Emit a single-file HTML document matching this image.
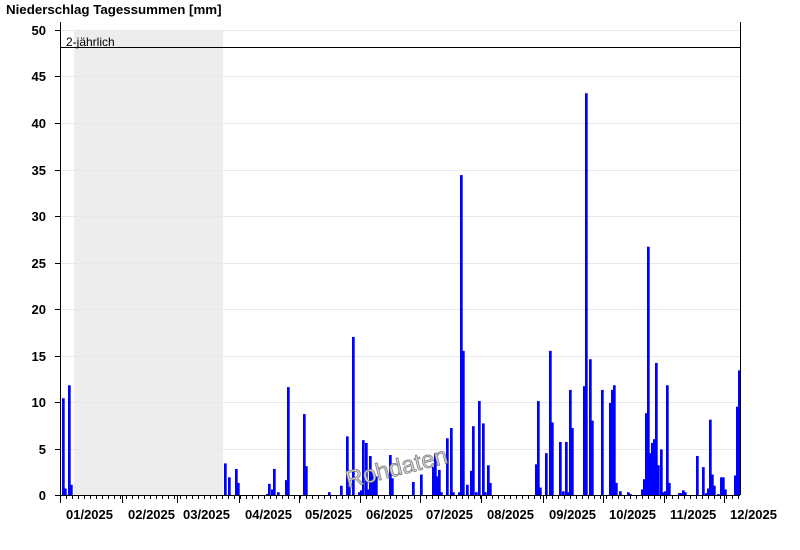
<!DOCTYPE html>
<html><head><meta charset="utf-8"><style>
body{margin:0;background:#fff;width:800px;height:550px;overflow:hidden}
svg{display:block}
text{font-family:"Liberation Sans",Arial,sans-serif}
</style></head><body>
<svg id="s" width="800" height="550" xmlns="http://www.w3.org/2000/svg">
<text x="6" y="14" font-size="13.3" font-weight="bold">Niederschlag Tagessummen [mm]</text>
<rect x="74" y="30" width="149" height="465" fill="#ededed"/>
<g id="grid" stroke="#e8e8e8" stroke-width="1"></g>
<g id="ylab" font-size="13" font-weight="bold" text-anchor="end"></g>
<g id="bars" fill="#0000ff"></g>
<line x1="60" y1="47.5" x2="740" y2="47.5" stroke="#000"/>
<text x="66" y="46" font-size="12">2-jährlich</text>
<text x="0" y="0" font-size="24" fill="#d0d0d0" stroke="#777" stroke-width="0.7" transform="translate(348,488) rotate(-14)">Rohdaten</text>
<line x1="60.5" y1="22" x2="60.5" y2="503" stroke="#000"/>
<line x1="740.5" y1="22" x2="740.5" y2="495" stroke="#000"/>
<line x1="56" y1="495.5" x2="740" y2="495.5" stroke="#000"/>
<g id="ticks" stroke="#000"></g>
<g id="xlab" font-size="13" font-weight="bold"></g>
</svg>
<script>
var NS="http://www.w3.org/2000/svg";
function el(p,t,a,tx){var e=document.createElementNS(NS,t);for(var k in a)e.setAttribute(k,a[k]);if(tx)e.textContent=tx;document.getElementById(p).appendChild(e);}
for(var v=0;v<=50;v+=5){var y=495-v*9.3;if(v>0)el("grid","line",{x1:60,y1:Math.round(y)+0.5,x2:740,y2:Math.round(y)+0.5});
el("ylab","text",{x:46,y:Math.round(y)+5},String(v));el("ticks","line",{x1:55,y1:Math.round(y)+0.5,x2:60,y2:Math.round(y)+0.5});}
var maj=[60,122,177,239,299,360,420,481,543,603,664,724];
var names=["01","02","03","04","05","06","07","08","09","10","11","12"];
for(var x=66;x<740;x+=6)el("ticks","line",{x1:x+0.5,y1:495,x2:x+0.5,y2:499});
maj.forEach(function(m,i){el("ticks","line",{x1:m+0.5,y1:495,x2:m+0.5,y2:503});el("xlab","text",{x:m+6,y:519},names[i]+"/2025");});
var d=[[62,10.4],[64,0.7],[68,11.8],[70,1.1],[224,3.4],[228,1.9],[235,2.8],[237,1.3],[266,0.1],[268,1.2],[271,0.6],[273,2.8],[277,0.3],[285,1.6],[287,11.6],[303,8.7],[305,3.1],[328,0.3],[340,1.0],[346,6.3],[348,0.9],[352,17],[358,0.3],[360,0.5],[362,5.9],[365,5.6],[367,0.6],[369,4.2],[371,2.5],[373,2.2],[375,2.0],[389,4.3],[391,1.8],[412,1.4],[420,2.2],[432,3.0],[434,4.5],[436,2.0],[438,2.7],[440,0.3],[446,6.1],[450,7.2],[452,0.3],[458,0.3],[460,34.4],[462,15.5],[466,1.1],[470,2.6],[472,7.4],[475,0.3],[478,10.1],[482,7.7],[484,0.3],[487,3.2],[489,1.3],[535,3.3],[537,10.1],[539,0.8],[545,4.5],[549,15.5],[551,7.8],[559,5.7],[562,0.4],[565,5.7],[567,0.3],[569,11.3],[571,7.2],[583,11.7],[585,43.2],[589,14.6],[591,8.0],[601,11.3],[609,9.9],[611,11.3],[613,11.8],[615,1.3],[619,0.4],[627,0.3],[629,0.1],[641,0.6],[643,1.7],[645,8.8],[647,26.7],[649,4.5],[651,5.6],[653,6.0],[655,14.2],[657,3.2],[660,4.9],[662,0.3],[664,0.4],[666,11.8],[668,1.3],[678,0.2],[680,0.2],[682,0.5],[684,0.3],[696,4.2],[702,3.0],[705,0.2],[707,0.7],[709,8.1],[711,2.2],[713,1.0],[717,0.1],[720,1.9],[722,1.9],[724,0.6],[734,2.1],[736,9.5],[738,13.4]];
d.forEach(function(b){var h=b[1]*9.3;el("bars","rect",{x:b[0],y:495-h,width:2.7,height:h});});
</script>
</body></html>
